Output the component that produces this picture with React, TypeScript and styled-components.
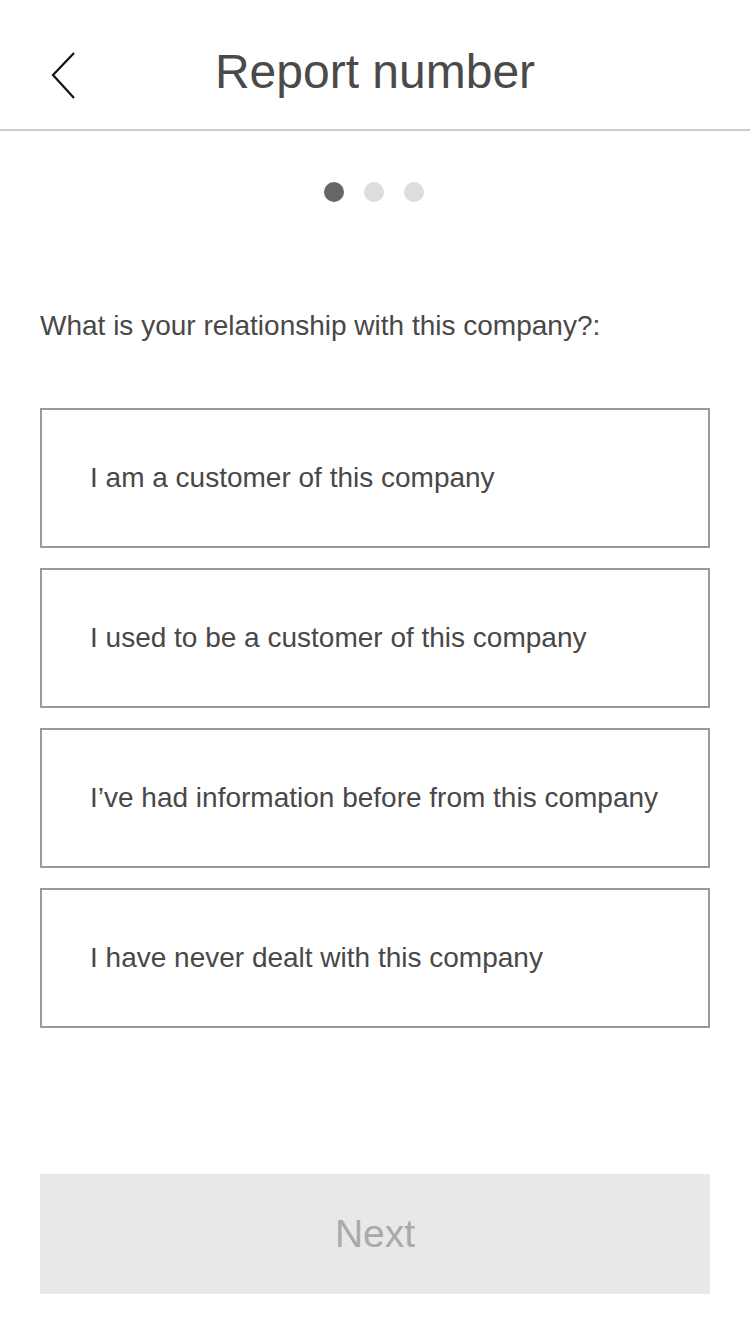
import React, { useState } from "react";
import styled, { createGlobalStyle } from "styled-components";

const GlobalStyle = createGlobalStyle`
  html, body {
    margin: 0;
    padding: 0;
    background: #ffffff;
  }
  * {
    box-sizing: border-box;
  }
  body {
    font-family: "Liberation Sans", Arial, sans-serif;
  }
`;

export const Screen = styled.div`
  width: 750px;
  min-height: 1334px;
  display: flex;
  flex-direction: column;
  background: #ffffff;
`;

export const Header = styled.header`
  position: relative;
  height: 131px;
  padding-top: 14px;
  display: flex;
  align-items: center;
  justify-content: center;
  border-bottom: 2px solid #cccccc;
`;

export const BackButton = styled.button`
  position: absolute;
  left: 44px;
  top: 46px;
  width: 40px;
  height: 58px;
  padding: 0;
  border: none;
  background: none;
  display: flex;
  align-items: center;
  justify-content: center;
  cursor: pointer;
`;

export const Title = styled.h1`
  margin: 0;
  font-size: 48px;
  line-height: 48px;
  font-weight: normal;
  color: #4a4a4a;
`;

export const Dots = styled.div`
  display: flex;
  justify-content: center;
  gap: 20px;
  margin-top: 51px;
  padding-right: 2px;
`;

export const Dot = styled.span<{ $active?: boolean }>`
  width: 20px;
  height: 20px;
  border-radius: 50%;
  background: ${(p) => (p.$active ? "#666666" : "#dddddd")};
`;

export const Body = styled.main`
  display: flex;
  flex-direction: column;
  padding: 0 40px;
`;

export const Question = styled.p`
  margin: 110px 0 0;
  font-size: 28px;
  line-height: 28px;
  color: #484848;
`;

export const Options = styled.div`
  display: flex;
  flex-direction: column;
  gap: 20px;
  margin-top: 68px;
`;

export const Option = styled.button<{ $selected?: boolean }>`
  height: 140px;
  width: 100%;
  display: flex;
  align-items: center;
  padding: 0 0 0 48px;
  border: 2px solid ${(p) => (p.$selected ? "#555555" : "#999999")};
  background: #ffffff;
  font-family: "Liberation Sans", Arial, sans-serif;
  font-size: 28px;
  color: #484848;
  text-align: left;
  cursor: pointer;
`;

export const NextButton = styled.button`
  margin-top: 146px;
  height: 120px;
  width: 100%;
  border: none;
  background: #e8e8e8;
  font-family: "Liberation Sans", Arial, sans-serif;
  font-size: 39px;
  color: #aaaaaa;
`;

const options = [
  "I am a customer of this company",
  "I used to be a customer of this company",
  "I\u2019ve had information before from this company",
  "I have never dealt with this company",
];

const ChevronLeft = () => (
  <svg width="28" height="48" viewBox="0 0 28 48" fill="none">
    <path d="M24 2 L3 24 L24 47" stroke="#111111" strokeWidth="2.2" />
  </svg>
);

export default function App() {
  const [selected, setSelected] = useState<number | null>(null);

  return (
    <>
      <GlobalStyle />
      <Screen>
        <Header>
          <BackButton aria-label="Back">
            <ChevronLeft />
          </BackButton>
          <Title>Report number</Title>
        </Header>

        <Dots>
          <Dot $active />
          <Dot />
          <Dot />
        </Dots>

        <Body>
          <Question>What is your relationship with this company?:</Question>
          <Options>
            {options.map((text, i) => (
              <Option key={text} $selected={selected === i} onClick={() => setSelected(i)}>
                {text}
              </Option>
            ))}
          </Options>
          <NextButton disabled={selected === null}>Next</NextButton>
        </Body>
      </Screen>
    </>
  );
}
